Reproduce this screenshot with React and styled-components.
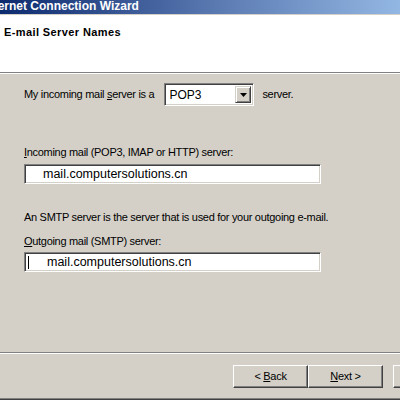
import React from 'react'
import styled, { createGlobalStyle } from 'styled-components'

const GlobalStyle = createGlobalStyle`
  html, body {
    margin: 0;
    padding: 0;
    background: #d4d0c8;
  }
  body {
    font-family: "Liberation Sans", Arial, sans-serif;
    font-size: 11px;
    letter-spacing: -0.3px;
    color: #000;
  }
`

const Window = styled.div`
  width: 400px;
  height: 400px;
  overflow: hidden;
  display: flex;
  flex-direction: column;
  background: #d4d0c8;
  box-sizing: border-box;
  border-bottom: 1px solid #404040;
`

const TitleBar = styled.div`
  height: 14px;
  flex: none;
  background: linear-gradient(90deg, #0c2a6e 0%, #5574ad 50%, #93b7e3 100%);
  color: #fff;
  font-weight: bold;
  font-size: 12px;
  letter-spacing: 0;
  line-height: 13px;
  white-space: nowrap;
  text-indent: -17px;
  border-bottom: 1px solid #d4d0c8;
`

const Header = styled.div`
  height: 58px;
  flex: none;
  background: #fff;
  border-bottom: 1px solid #808080;
  box-shadow: 0 1px 0 #fff;
  margin-bottom: 1px;
  padding: 11px 0 0 4px;
  box-sizing: border-box;
`

const HeaderTitle = styled.div`
  font-weight: bold;
  font-size: 11px;
  letter-spacing: 0.4px;
  line-height: 13px;
`

const Body = styled.div`
  flex: 1;
  padding: 9px 0 0 24px;
  display: flex;
  flex-direction: column;
  border-bottom: 1px solid #808080;
  box-shadow: 0 1px 0 #fff;
`

const Row = styled.div`
  display: flex;
  align-items: center;
  height: 23px;
`

const Label = styled.div`
  line-height: 13px;
  white-space: nowrap;
  margin-top: ${p => p.$top || 0}px;
`

const Key = styled.span`
  text-decoration: underline;
  text-underline-offset: 1px;
`

const Sunken = styled.div`
  box-sizing: border-box;
  background: #fff;
  border-top: 1px solid #808080;
  border-left: 1px solid #808080;
  border-right: 1px solid #fff;
  border-bottom: 1px solid #fff;
  box-shadow: inset 1px 1px 0 #404040, inset -1px -1px 0 #d4d0c8;
`

const Select = styled(Sunken)`
  width: 90px;
  height: 23px;
  margin: 0 8px 0 10px;
  display: flex;
  align-items: center;
  padding: 0 2px 0 4px;
  font-size: 12px;
  letter-spacing: 0;
  justify-content: space-between;
`

const DropButton = styled.div`
  width: 16px;
  height: 17px;
  box-sizing: border-box;
  background: #d4d0c8;
  border-top: 1px solid #d4d0c8;
  border-left: 1px solid #d4d0c8;
  border-right: 1px solid #404040;
  border-bottom: 1px solid #404040;
  box-shadow: inset 1px 1px 0 #fff, inset -1px -1px 0 #808080;
  display: flex;
  align-items: center;
  justify-content: center;
`

const TextBox = styled(Sunken)`
  width: 297px;
  height: 20px;
  margin-top: ${p => p.$top}px;
  padding-left: ${p => p.$indent}px;
  font-size: 12.5px;
  letter-spacing: 0;
  line-height: 18px;
  display: flex;
  align-items: center;
  position: relative;
`

const Caret = styled.span`
  position: absolute;
  left: 3px;
  top: 3px;
  width: 1px;
  height: 13px;
  background: #000;
`

const Footer = styled.div`
  height: 46px;
  flex: none;
  display: flex;
  align-items: flex-start;
  padding: 12px 0 0 233px;
  box-sizing: border-box;
  border-bottom: 1px solid #808080;
`

const Button = styled.div`
  flex: none;
  width: 75px;
  height: 23px;
  box-sizing: border-box;
  margin-right: ${p => p.$gap || 0}px;
  background: #d4d0c8;
  border-top: 1px solid #fff;
  border-left: 1px solid #fff;
  border-right: 1px solid #404040;
  border-bottom: 1px solid #404040;
  box-shadow: inset -1px -1px 0 #808080;
  display: flex;
  align-items: center;
  justify-content: center;
  line-height: 13px;
  white-space: pre;
`

export default function App() {
  return (
    <>
      <GlobalStyle />
      <Window>
        <TitleBar>Internet Connection Wizard</TitleBar>
        <Header>
          <HeaderTitle>E-mail Server Names</HeaderTitle>
        </Header>
        <Body>
          <Row>
            <Label>My incoming mail <Key>s</Key>erver is a</Label>
            <Select>
              <span>POP3</span>
              <DropButton>
                <svg width="7" height="4" viewBox="0 0 7 4">
                  <path d="M0 0h7L3.5 4z" fill="#000" />
                </svg>
              </DropButton>
            </Select>
            <Label>server.</Label>
          </Row>
          <Label $top={40}><Key>I</Key>ncoming mail (POP3, IMAP or HTTP) server:</Label>
          <TextBox $top={5} $indent={18}>mail.computersolutions.cn</TextBox>
          <Label $top={27}>An SMTP server is the server that is used for your outgoing e-mail.</Label>
          <Label $top={11}><Key>O</Key>utgoing mail (SMTP) server:</Label>
          <TextBox $top={4} $indent={22}>
            <Caret />
            mail.computersolutions.cn
          </TextBox>
        </Body>
        <Footer>
          <Button>{'< '}<Key>B</Key>ack</Button>
          <Button $gap={10}><Key>N</Key>{'ext >'}</Button>
          <Button>Cancel</Button>
        </Footer>
      </Window>
    </>
  )
}
